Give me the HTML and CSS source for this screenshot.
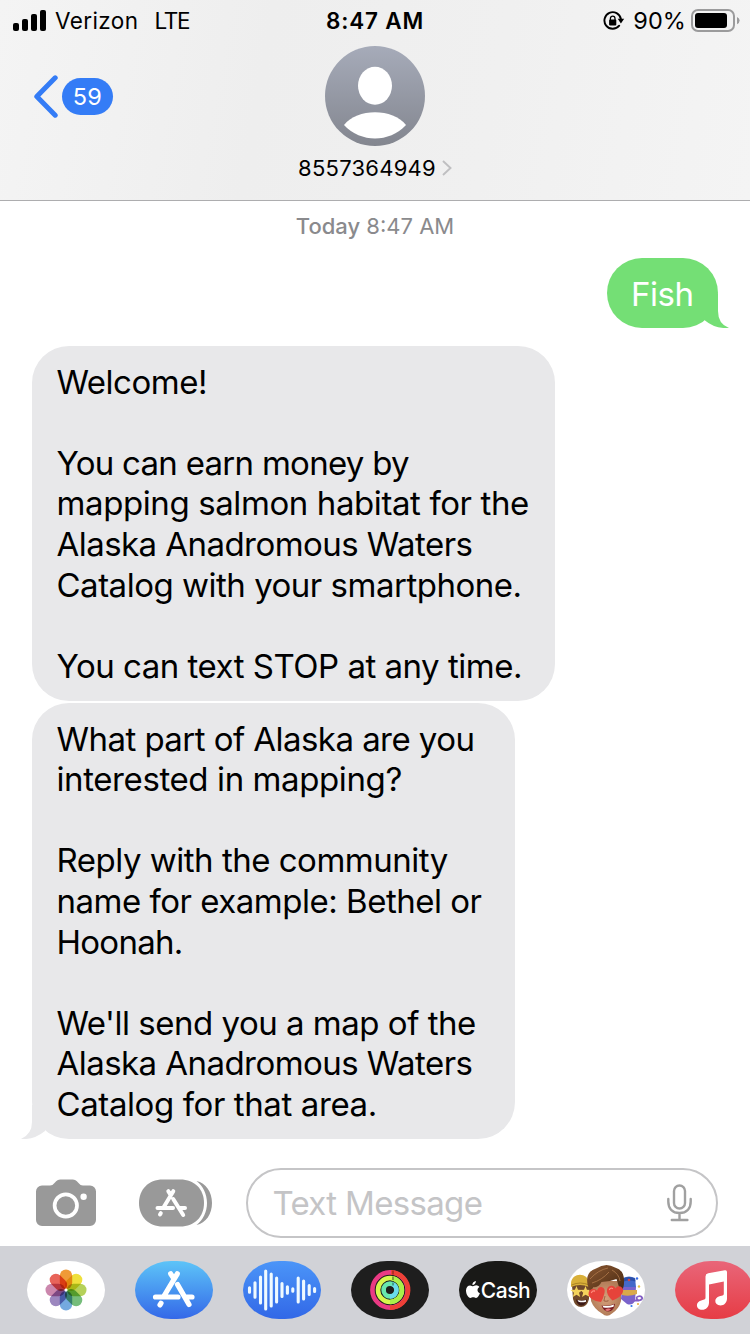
FILE: index.html
```html
<!DOCTYPE html>
<html lang="en">
<head>
<meta charset="utf-8">
<title>Messages</title>
<link rel="stylesheet" href="styles.css">
</head>
<body>
<div class="phone">
  <header class="header">
    <div class="status">
      <div class="status-left">
        <svg class="signal" width="34" height="22" viewBox="0 0 34 22"><rect x="0" y="13" width="6" height="8" rx="2"/><rect x="9" y="9" width="6" height="12" rx="2"/><rect x="18" y="4" width="6" height="17" rx="2"/><rect x="27" y="0" width="6" height="21" rx="2"/></svg>
        <span class="carrier">Verizon</span><span class="network">LTE</span>
      </div>
      <div class="clock">8:47 AM</div>
      <div class="status-right">
        <svg class="lock" width="22" height="20" viewBox="0 0 22 20"><path d="M16.2 14.7A8.3 8.3 0 1 1 17.9 8" fill="none" stroke="#000" stroke-width="1.9" stroke-linecap="round"/><path d="M14.7 7.8h6.5l-3.3 4.6z"/><rect x="6.1" y="8.6" width="7.2" height="6" rx="1"/><path d="M7.4 9V7.4a2.3 2.3 0 0 1 4.6 0V9" fill="none" stroke="#000" stroke-width="1.3"/></svg>
        <span class="percent">90%</span>
        <svg class="battery" width="49" height="24" viewBox="0 0 49 24"><rect x="1" y="1" width="42" height="21" rx="6" fill="none" stroke="#9b9b9c" stroke-width="2"/><rect x="4" y="4" width="32" height="15" rx="3"/><path d="M46 8q2.600 1 2.600 3.600T46 15.200z" fill="#9b9b9c"/></svg>
      </div>
    </div>
    <div class="nav">
      <div class="back">
        <svg width="25" height="43" viewBox="0 0 25 43"><path d="M22.200 2.800 3.800 21.500 22.200 40.200" fill="none" stroke="#347cf6" stroke-width="5" stroke-linecap="round" stroke-linejoin="round"/></svg>
        <span class="count">59</span>
      </div>
      <div class="contact">
        <svg width="100" height="100" viewBox="0 0 100 100"><defs><linearGradient id="avatar" x2="0" y2="1"><stop stop-color="#a6abb9"/><stop offset="1" stop-color="#83868f"/></linearGradient></defs><circle cx="50" cy="50" r="50" fill="url(#avatar)"/><ellipse cx="50" cy="39.700" rx="17" ry="19" fill="#fff"/><path d="M19 79C32 62 68 62 81 79C64 97 36 97 19 79z" fill="#fff"/></svg>
        <div class="number"><span>8557364949</span><svg width="10" height="16" viewBox="0 0 10 16"><path d="m1 1 7.500 7L1 15" fill="none" stroke="#bfbfc1" stroke-width="1.900"/></svg></div>
      </div>
    </div>
  </header>

  <main class="thread">
    <div class="date"><b>Today</b> 8:47 AM</div>
    <div class="bubble sent"><span>Fish</span>
      <svg class="tail tail-right" width="34" height="34" viewBox="0 0 34 34"><path d="M10 0h13v17q0 13 11 17-14 1-24-7.500z" fill="#74df75"/></svg>
    </div>
    <div class="bubble received first">
      <p>Welcome!</p>
      <p>&nbsp;</p>
      <p class="tightest">You can earn money by</p>
      <p class="loose">mapping salmon habitat for the</p>
      <p class="tight">Alaska Anadromous Waters</p>
      <p>Catalog with your smartphone.</p>
      <p>&nbsp;</p>
      <p>You can text STOP at any time.</p>
    </div>
    <div class="bubble received second">
      <p class="tight">What part of Alaska are you</p>
      <p class="loose">interested in mapping?</p>
      <p>&nbsp;</p>
      <p>Reply with the community</p>
      <p>name for example: Bethel or</p>
      <p class="tightest">Hoonah.</p>
      <p>&nbsp;</p>
      <p>We'll send you a map of the</p>
      <p class="tight">Alaska Anadromous Waters</p>
      <p class="loose">Catalog for that area.</p>
      <svg class="tail tail-left" width="34" height="34" viewBox="0 0 34 34"><path d="M24 0H11v17Q11 29 0 34q13 1 24-8z" fill="#e8e8ea"/></svg>
    </div>
  </main>

  <div class="composer">
    <svg class="camera" width="60" height="48" viewBox="0 0 60 48"><path d="M6 6.500h8c2 0 3-.8 4.500-2.500C21 1.200 22 .500 24.500.500h12c2.500 0 3.500.7 6 3.500C44 5.700 45 6.500 47 6.500h7a6 6 0 0 1 6 6V41a6 6 0 0 1-6 6H6a6 6 0 0 1-6-6V12.500a6 6 0 0 1 6-6z" fill="#999"/><circle cx="29.800" cy="26.500" r="11.200" fill="none" stroke="#fff" stroke-width="3.700"/><circle cx="47.600" cy="17.700" r="3.200" fill="#fff"/></svg>
    <svg class="apps" width="74" height="48" viewBox="0 0 74 48"><path d="M24 .500h17c15 0 24 10 24 23.500S56 47.500 41 47.500H24C9 47.500 0 37 0 24S9 .500 24 .500z" fill="#999"/><path d="M57.500 2C67 4 73 13 73 24s-6 20-15.500 22C64 41 68 33 68 24S64 7 57.500 2z" fill="#999"/><g fill="none" stroke="#fff" stroke-width="4" stroke-linecap="round"><path d="M34.300 12.200 24.500 28.500M29.300 12.200l2 3.400M18.500 29H34M40.500 29H46M34.200 20l10 16M21.800 34.200l-.8 1.300"/></g></svg>
    <div class="field"><span>Text Message</span>
      <svg width="25" height="38" viewBox="0 0 25 38"><g fill="none" stroke="#a0a0a0" stroke-width="2.400" stroke-linecap="round"><rect x="7" y="1.500" width="11" height="23" rx="5.500"/><path d="M1.300 15v2.500c0 7 4 11.500 11.200 11.500s11.200-4.500 11.200-11.500V15M12.500 29v7M4.800 36h15.600"/></g></svg>
    </div>
  </div>

  <div class="drawer">
    <div class="app photos"><svg width="78" height="58" viewBox="0 0 78 58"><g class="petals" transform="translate(39 29)"><rect x="-6.200" y="-20.500" width="12.400" height="19.500" rx="6.200" fill="#f09a37"/><rect x="-6.200" y="-20.500" width="12.400" height="19.500" rx="6.200" fill="#efe03c" transform="rotate(45)"/><rect x="-6.200" y="-20.500" width="12.400" height="19.500" rx="6.200" fill="#b5d15a" transform="rotate(90)"/><rect x="-6.200" y="-20.500" width="12.400" height="19.500" rx="6.200" fill="#76bd7b" transform="rotate(135)"/><rect x="-6.200" y="-20.500" width="12.400" height="19.500" rx="6.200" fill="#74a9df" transform="rotate(180)"/><rect x="-6.200" y="-20.500" width="12.400" height="19.500" rx="6.200" fill="#9c87bf" transform="rotate(225)"/><rect x="-6.200" y="-20.500" width="12.400" height="19.500" rx="6.200" fill="#cb87ad" transform="rotate(270)"/><rect x="-6.200" y="-20.500" width="12.400" height="19.500" rx="6.200" fill="#e8645a" transform="rotate(315)"/></g><circle cx="39" cy="29" r="1.500" fill="#fff"/></svg></div>
    <div class="app store"><svg width="78" height="58" viewBox="0 0 78 58"><g fill="none" stroke="#fff" stroke-width="5.200" stroke-linecap="round"><path d="M42.300 12.800 29 35M35.700 12.800l3 4.600M20.500 36H43M50 36h7M42.500 23.500 54 43.500M26 42.200l-1 1.700"/></g></svg></div>
    <div class="app audio"><svg width="78" height="58" viewBox="0 0 78 58"><path d="M6.500 26.700v4.600M12 21.700v14.600M17.500 16v26M22.700 10v38M28.200 13v32M33.600 17v24M39 22.500v13M44.400 25.700v6.600M49.800 27.700v2.600M55.200 17v24M60.600 20v18M66.200 24.500v9M71.600 27.500v3" fill="none" stroke="#effaff" stroke-width="3.100" stroke-linecap="round"/></svg></div>
    <div class="app activity"><svg width="78" height="58" viewBox="0 0 78 58"><g fill="none" stroke-width="4.600"><circle cx="39" cy="29" r="17.600" stroke="#ea3a84"/><path d="M40 11.400a17.600 17.600 0 0 1-1 35.200" stroke="#ee4037"/><circle cx="39" cy="29" r="12" stroke="#d7f74d"/><path d="M41 17.200a12 12 0 0 1-2 23.800" stroke="#a9f04a"/><circle cx="39" cy="29" r="6.400" stroke="#68e7ad"/><path d="M41 22.900a6.400 6.400 0 0 1-2 12.500" stroke="#6adced"/></g><path d="M42 9.500v4" stroke="#b12c28" stroke-width="2"/><path d="M42 15.500v3.500" stroke="#7d9e34" stroke-width="2"/><path d="M42 21.500v3" stroke="#41a187" stroke-width="2"/></svg></div>
    <div class="app cash"><svg width="14" height="18" viewBox="0 0 14 18"><path d="M9.900 0c.1 2-1.500 4-3.500 4C6.200 2.100 8 .2 9.900 0zM7 5.200c.8 0 1.700-.9 3.200-.9 1.300 0 2.500.7 3.200 1.700-2.800 1.700-2.300 5.200.5 6.300-.7 2-2.100 4.700-3.900 4.700-1.100 0-1.500-.7-2.800-.7s-1.800.7-2.800.7C2.300 17 0 13 0 9.500 0 6.200 2 4.400 4.100 4.400c1.300 0 2.200.8 2.900.8z" fill="#fff"/></svg><span>Cash</span></div>
    <div class="app memoji"><svg width="78" height="58" viewBox="0 0 78 58"><defs><linearGradient id="hair" x2="1" y2="1"><stop stop-color="#8b5832"/><stop offset=".5" stop-color="#694021"/><stop offset="1" stop-color="#422512"/></linearGradient><radialGradient id="skin"><stop stop-color="#d6a07c"/><stop offset="1" stop-color="#b27c58"/></radialGradient></defs>
      <!-- star-eyed face -->
      <path d="M5 24h17v14q-2 8-8 8t-8-8z" fill="#70492b"/><path d="M4 26v-4C5 11 21 11 22 22v4q-9-4-18 0z" fill="#d9b03a"/><path d="M4.500 24q9-4 17.500 0" fill="none" stroke="#ab8326"/><path d="m9.500 25 1.500 3.800 4.500.2-3.500 2.800 1.200 4.200-3.700-2.300L5.800 36 7 31.800 3.500 29l4.400-.2zM18.500 25l1.400 3.800 3.100.2v7l-4.500-2.300-3.500 2.300 1.200-4.200-2.700-2.800 3.500-.2z" fill="#f4d35c"/><path d="M9 38.500q5 2 11 0-1 6-5.500 6T9 38.500z" fill="#3c1916"/><path d="M10.500 39q4 1.500 8.500 0v1.800q-4 1-7.500 0z" fill="#fff"/>
      <!-- party face -->
      <path d="M55 26h14l-1 14q-3 5-8 3l-6-5z" fill="#7a63cb"/><path d="M54 26l2-9q6-3 12 0l1 9z" fill="#4469c9"/><path d="M56 17.500q6-3 12 0l.5 3q-6-2-12 0z" fill="#2b4fa8"/><path d="M55 29h15v4q-8 3-15 1z" fill="#d9a94b"/><path d="M64 39.500h8q4-1 3-3t-4-1 0 3.500" fill="none" stroke="#825dc4" stroke-width="1.800"/><circle cx="62" cy="19" r="1.300" fill="#d54445"/><circle cx="70" cy="17.500" r="1.200" fill="#376be6"/><circle cx="72" cy="25.500" r="1.200" fill="#e7c246"/><circle cx="71" cy="43" r="1" fill="#e7aa36"/><circle cx="64.500" cy="45" r="1.100" fill="#3179ec"/>
      <!-- heart-eyed face -->
      <path d="M23 20h31v20q-2 8-9 12.500-5 4.500-10 0Q27 48 24 40z" fill="url(#skin)"/>
      <path d="M23 31Q15 12 29 7.500 39 1 48 6.500 58 9 57 22q0 5-3 8l-2-4-2.500-8q-7 3-15 3-3 6-8 5z" fill="url(#hair)"/><path d="M23 18Q31 9 41 7M25 22q10-3 17-11M45 9q7 4 8 11" fill="none" stroke="#a97447" stroke-width=".9"/>
      <path d="m38 35-1 4.500q2 1.500 4.500 0" fill="none" stroke="#a3694a" stroke-width="1.100"/>
      <path d="M34.500 44.500q7 1 13.500-1.800-1 7.500-6.500 7.800-5 0-7-6z" fill="#7a2026"/><path d="M35.500 44.700q6 .8 11.500-1.300l-.5 2.300q-5 1.800-10 .8z" fill="#fff"/><path d="M38 49q3-2.500 6-.8-2.800 3-6 .8z" fill="#e67879"/>
      <path d="M34 41q-11.500-1.500-12.500-7.500 0-6 5.500-5.500 2 .3 3 1.800 1-4 4.500-3.800 4 .8 3 6-1 5-3.500 9z" fill="#e6433a"/><path d="M45.500 39.500q-6.500-6-5.500-11 1.500-4.500 6-3.500 2 .7 2.500 2.500 1.500-3 5-2 4 2 2 6.500-2.500 5-10 7.500z" fill="#e6433a"/><path d="M24.500 31.500q1-2 3-1.500M42.500 28.500q1-2 3-1" fill="none" stroke="#ff8a7a" stroke-width="1.300" stroke-linecap="round"/></svg></div>
    <div class="app music"><svg width="78" height="58" viewBox="0 0 78 58"><path fill-rule="evenodd" d="M30.500 15.500q0-2.600 2.700-3.200L49.800 9.200q2.200-.4 2.200 1.800V37.500c0 4.200-3 7-6.500 7-6.500 0-7-7.600-1-9.200l3-.8q1.300-.4 1.300-1.800V20.500L34 23.500v18c0 4.500-3 7.300-6.800 7.300-6.500 0-7.200-7.800-1-9.400l3-.8q1.300-.4 1.300-1.800z" fill="#fff"/></svg></div>
  </div>
</div>
</body>
</html>
```
FILE: styles.css
```css
* { box-sizing: border-box; }
body { margin: 0; background: #fff; font-family: Inter, "Liberation Sans", sans-serif; color: #000; }
p { margin: 0; }
svg { display: block; flex: none; }
.phone { width: 750px; height: 1334px; overflow: hidden; display: flex; flex-direction: column; }
.header { height: 201px; flex: none; border-bottom: 1px solid #adadaf; background: linear-gradient(100deg, #f4f4f4, #eee 35%, #f0f0f0 65%, #f4f4f4); }
.status { height: 40px; display: grid; grid-template-columns: 1fr 120px 1fr; align-items: center; font-size: 22.500px; line-height: 42px; padding: 0 0 0 13px; }
.status-left, .status-right { display: flex; align-items: center; white-space: nowrap; }
.status-right { justify-content: flex-end; padding-right: 10px; }
.signal { margin-right: 8px; margin-top: -1px; }
.carrier { letter-spacing: .4px; margin-right: 16px; }
.network { letter-spacing: -1.300px; }
.clock { font-weight: 600; text-align: center; letter-spacing: .8px; white-space: nowrap; margin-left: -13px; }
.lock { margin-right: 8px; }
.percent { font-size: 23.500px; letter-spacing: .1px; margin-right: 5px; }
.battery { margin-top: -1px; }
.nav { display: grid; grid-template-columns: 1fr 200px 1fr; padding-top: 6px; }
.back { display: flex; align-items: center; height: 100px; padding-left: 33px; gap: 4px; }
.count { width: 51px; height: 37px; border-radius: 19px; background: #347cf6; color: #fff; font-size: 23.500px; line-height: 37px; text-align: center; letter-spacing: .4px; }
.contact { display: flex; flex-direction: column; align-items: center; }
.number { display: flex; align-items: center; gap: 6px; height: 30px; margin-top: 7px; font-size: 22px; letter-spacing: .25px; }
.thread { height: 948px; flex: none; padding: 0 32px; display: flex; flex-direction: column; align-items: flex-start; }
.date { align-self: center; height: 57px; line-height: 51px; font-size: 22px; color: #8a8a8d; white-space: nowrap; }
.date b { font-weight: 500; }
.bubble { position: relative; border-radius: 37px; font-size: 33px; line-height: 40.600px; letter-spacing: -.49px; white-space: nowrap; }
.tight { letter-spacing: -.55px; }
.tightest { letter-spacing: -.72px; }
.loose { letter-spacing: -.4px; }
.sent { align-self: flex-end; width: 111px; height: 70px; background: #74df75; color: #fff; line-height: 72px; padding-left: 24px; }
.received { background: #e8e8ea; padding: 15.600px 25px 0 24.500px; }
.first { width: 523px; height: 355px; margin-top: 18px; }
.second { width: 483px; height: 436px; margin-top: 2px; }
.tail { position: absolute; bottom: 0; }
.tail-right { right: -11px; }
.tail-left { left: -11px; }
.composer { height: 97px; flex: none; display: flex; align-items: center; padding: 11px 32px 0 36px; }
.apps { margin-left: 43px; }
.field { flex: 1; height: 70px; margin-left: 33px; border: 2px solid #c5c5c7; border-radius: 35px; display: flex; align-items: center; justify-content: space-between; padding: 0 24px 0 24.500px; font-size: 33px; letter-spacing: -.68px; color: #c4c4c6; }
.drawer { height: 88px; flex: none; background: #d1d2d7; display: flex; gap: 30px; padding: 15px 0 0 27px; }
.app { width: 78px; height: 58px; flex: none; border-radius: 36px / 29px; overflow: hidden; }
.photos, .memoji { background: #fff; }
.petals rect { mix-blend-mode: multiply; }
.photos { isolation: isolate; }
.store { background: linear-gradient(#5dc4f8, #3468e8); }
.audio { background: linear-gradient(#4b95f8, #3268e7); }
.activity { background: #1e1e1e; }
.cash { background: #191917; color: #fff; display: flex; align-items: center; justify-content: center; gap: 1px; font-size: 21px; font-weight: 500; letter-spacing: -.5px; }
.music { background: linear-gradient(#e96679, #e63c45); }
```
